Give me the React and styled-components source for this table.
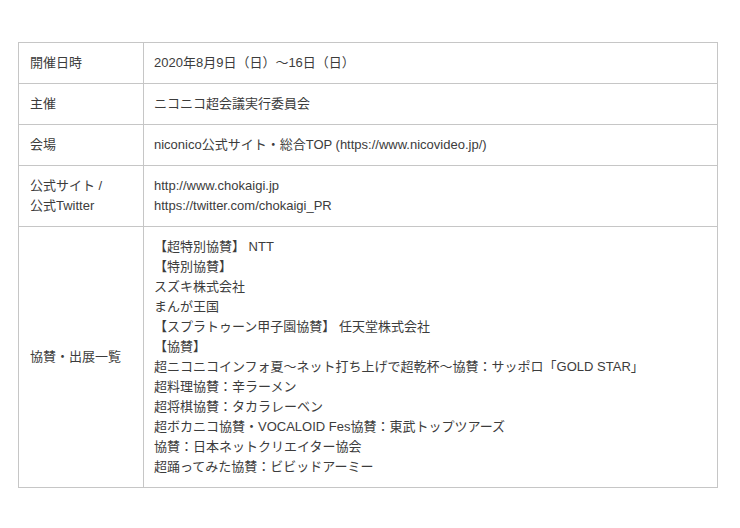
import React from "react";
import styled, { createGlobalStyle } from "styled-components";

const GlobalStyle = createGlobalStyle`
  body {
    margin: 0;
    background: #fff;
    font-family: "Liberation Sans", "Noto Sans CJK JP", sans-serif;
  }
`;

const Page = styled.div`
  padding: 42px 0 0 18px;
`;

const Table = styled.table`
  width: 700px;
  border-collapse: collapse;
  font-size: 13px;
  line-height: 20px;
  color: #3c3c3c;
`;

const Head = styled.th`
  width: 103px;
  padding: 10px 10px 10px 11px;
  border: 1px solid #c6c6c6;
  text-align: left;
  vertical-align: middle;
  font-weight: normal;
`;

const Cell = styled.td`
  padding: 10px 10px 10px 10px;
  border: 1px solid #c6c6c6;
  text-align: left;
  vertical-align: top;
`;

const Line = styled.div`
  white-space: nowrap;
`;

const rows = [
  { label: ["開催日時"], lines: ["2020年8月9日（日）～16日（日）"] },
  { label: ["主催"], lines: ["ニコニコ超会議実行委員会"] },
  { label: ["会場"], lines: ["niconico公式サイト・総合TOP (https://www.nicovideo.jp/)"] },
  {
    label: ["公式サイト /", "公式Twitter"],
    lines: ["http://www.chokaigi.jp", "https://twitter.com/chokaigi_PR"],
  },
  {
    label: ["協賛・出展一覧"],
    lines: [
      "【超特別協賛】 NTT",
      "【特別協賛】",
      "スズキ株式会社",
      "まんが王国",
      "【スプラトゥーン甲子園協賛】 任天堂株式会社",
      "【協賛】",
      "超ニコニコインフォ夏～ネット打ち上げで超乾杯～協賛：サッポロ「GOLD STAR」",
      "超料理協賛：辛ラーメン",
      "超将棋協賛：タカラレーベン",
      "超ボカニコ協賛・VOCALOID Fes協賛：東武トップツアーズ",
      "協賛：日本ネットクリエイター協会",
      "超踊ってみた協賛：ビビッドアーミー",
    ],
  },
];

export default function App() {
  return (
    <>
      <GlobalStyle />
      <Page>
        <Table>
          <tbody>
            {rows.map((row, i) => (
              <tr key={i}>
                <Head>
                  {row.label.map((t, j) => (
                    <Line key={j}>{t}</Line>
                  ))}
                </Head>
                <Cell>
                  {row.lines.map((t, j) => (
                    <Line key={j}>{t}</Line>
                  ))}
                </Cell>
              </tr>
            ))}
          </tbody>
        </Table>
      </Page>
    </>
  );
}
